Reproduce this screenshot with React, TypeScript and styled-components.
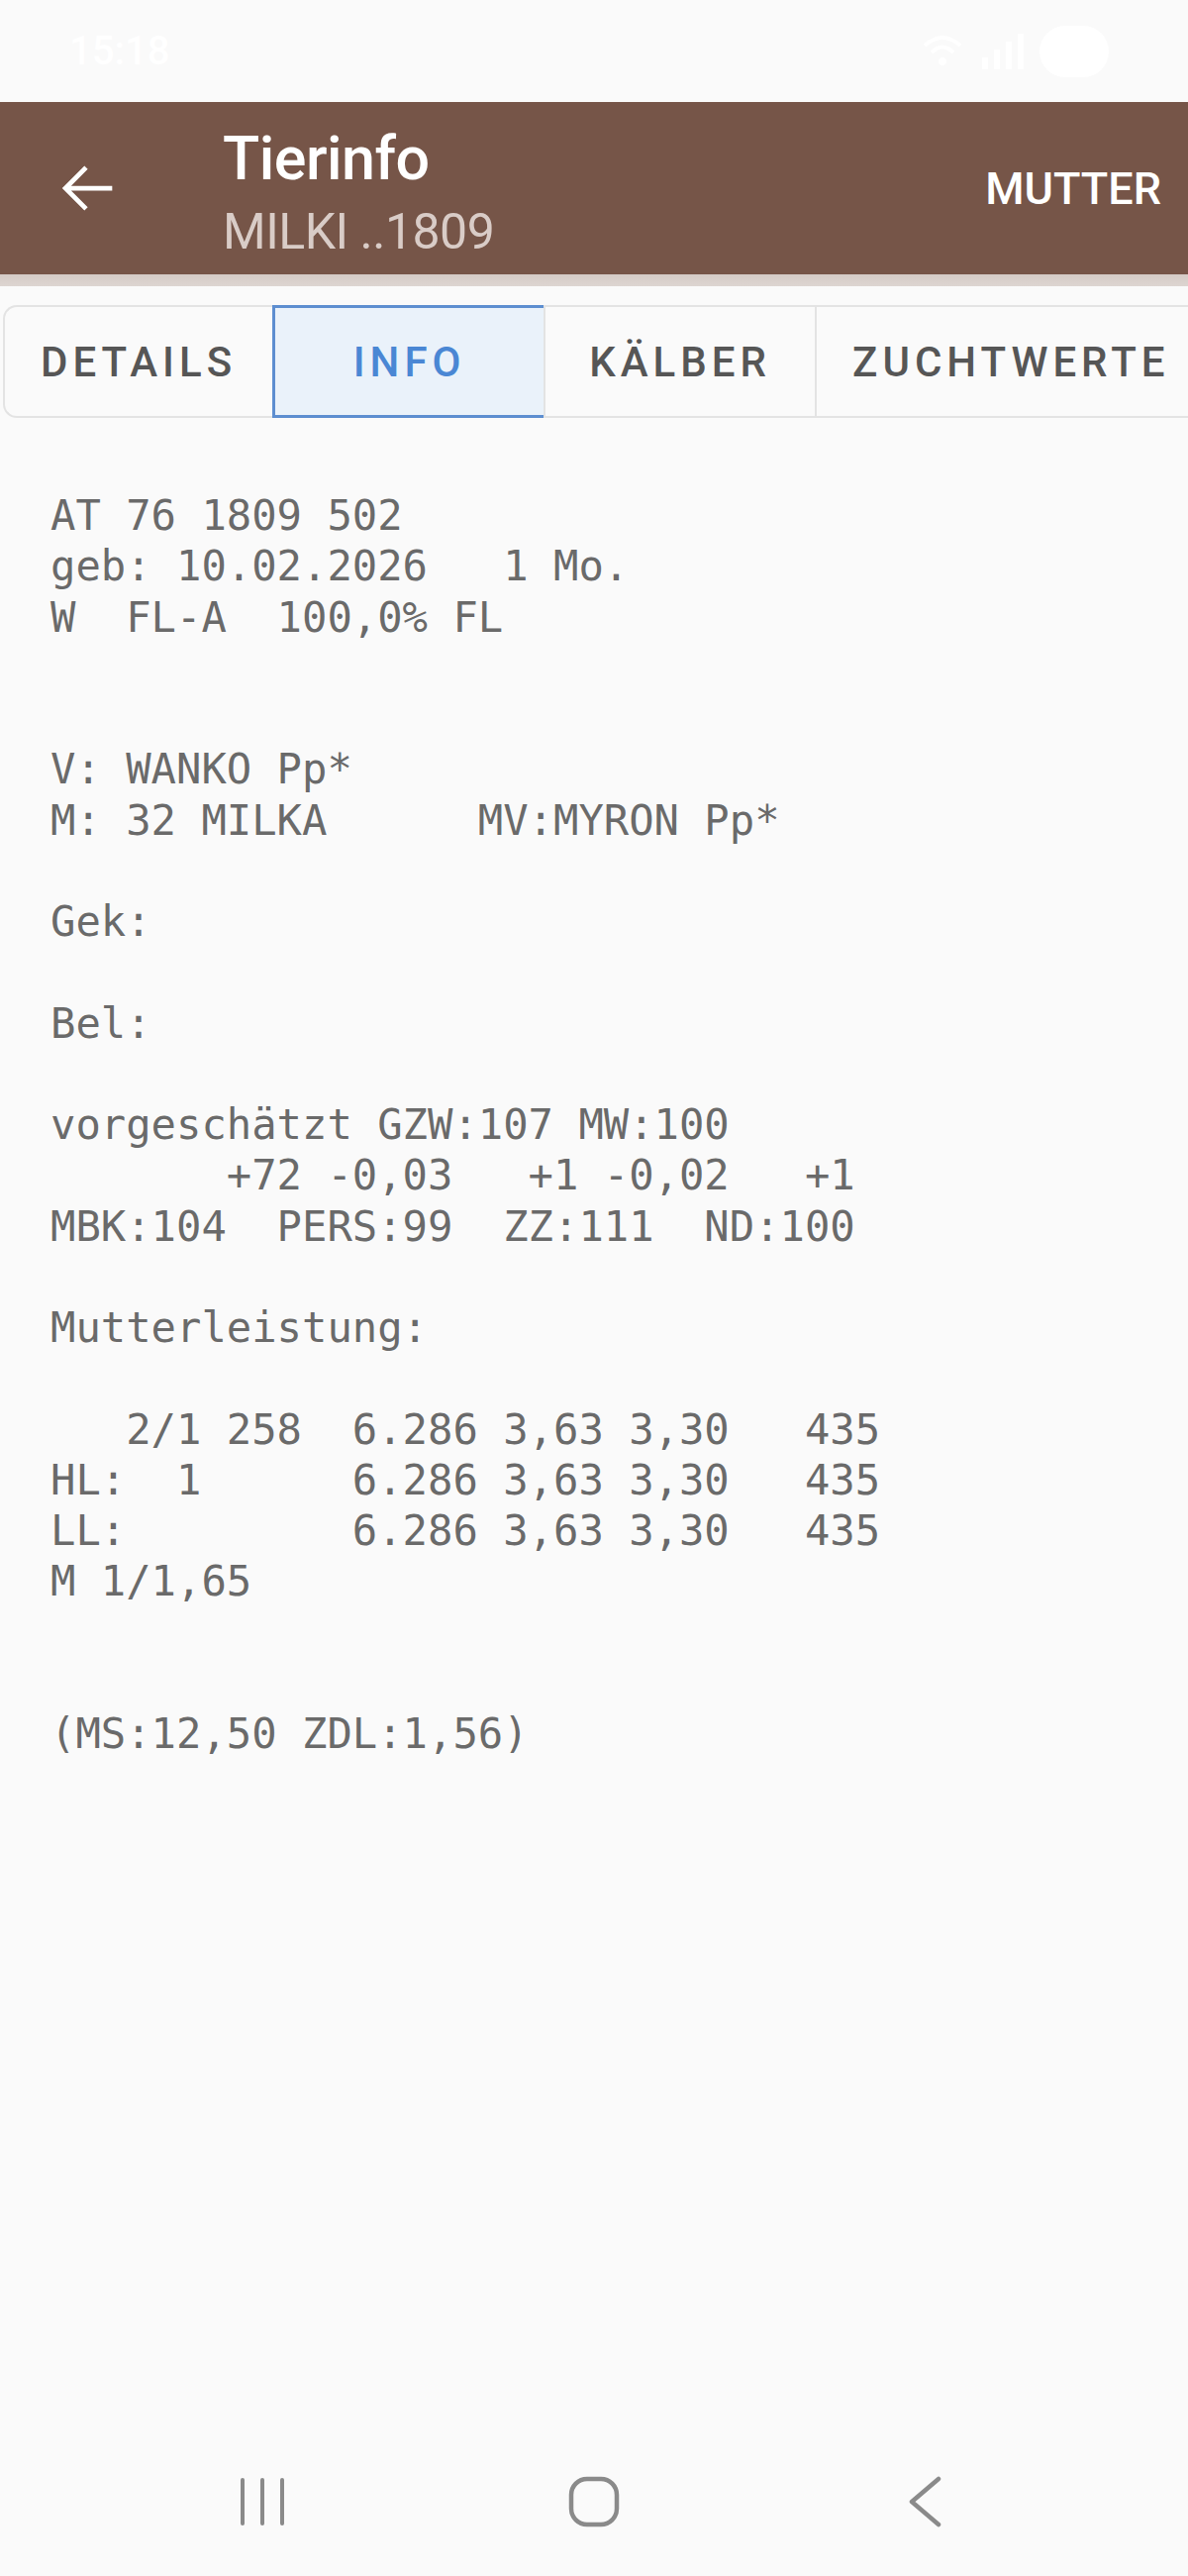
import * as React from "react";
import styled, { createGlobalStyle } from "styled-components";

const GlobalStyle = createGlobalStyle`
  html, body {
    margin: 0;
    padding: 0;
    background: #fafafa;
  }
  * {
    box-sizing: border-box;
  }
`;

const Screen = styled.div`
  display: flex;
  flex-direction: column;
  min-height: 2601px;
  width: 1200px;
  background: #fafafa;
  font-family: Roboto, "Noto Sans", sans-serif;
  overflow: hidden;
`;

const StatusBar = styled.div`
  height: 103px;
  display: flex;
  align-items: center;
  justify-content: space-between;
  padding: 0 80px 0 70px;
  color: #ffffff;
  font-size: 40px;
  font-weight: 500;
`;

const StatusIcons = styled.div`
  display: flex;
  align-items: center;
  gap: 14px;
`;

const Header = styled.div`
  height: 174px;
  background: #765548;
  display: flex;
  align-items: flex-start;
  color: #ffffff;
`;

const BackButton = styled.div`
  width: 225px;
  height: 174px;
  display: flex;
  align-items: center;
  padding-left: 50px;
`;

const TitleBlock = styled.div`
  flex: 1;
  display: flex;
  flex-direction: column;
  padding-top: 21px;
`;

const Title = styled.div`
  font-size: 61px;
  font-weight: 500;
  line-height: 73px;
  letter-spacing: -0.5px;
`;

const SubTitle = styled.div`
  margin-top: 7px;
  font-size: 50px;
  line-height: 61px;
  color: #d9ccc7;
  letter-spacing: -0.5px;
`;

const Action = styled.div`
  height: 174px;
  display: flex;
  align-items: center;
  padding-right: 27px;
  font-size: 45px;
  font-weight: 500;
`;

const HeaderShade = styled.div`
  height: 12px;
  background: linear-gradient(#d5cbc6, #ddd5d1);
`;

const TabBar = styled.div`
  display: flex;
  margin: 19px 0 0 3px;
  height: 114px;
  overflow: hidden;
`;

const Tab = styled.div<{ $active?: boolean; $first?: boolean }>`
  flex-shrink: 0;
  min-width: ${(p) => (p.$first ? "271px" : "274px")};
  padding: 0 36px;
  display: flex;
  align-items: center;
  justify-content: center;
  font-size: 42px;
  font-weight: 500;
  letter-spacing: 5px;
  white-space: nowrap;
  color: ${(p) => (p.$active ? "#4a87d4" : "#565656")};
  background: ${(p) => (p.$active ? "#eaf2fa" : "#fafafa")};
  border: ${(p) => (p.$active ? "3px solid #5d8ed0" : "2px solid #e3e3e3")};
  border-right: none;
  border-radius: ${(p) => (p.$first ? "14px 0 0 14px" : "0")};
`;

const Content = styled.div`
  flex: 1;
  padding: 73px 0 0 51px;
`;

const InfoText = styled.pre`
  margin: 0;
  font-family: "DejaVu Sans Mono", "Liberation Mono", monospace;
  font-size: 42.2px;
  line-height: 51.25px;
  color: #6a6a6a;
  white-space: pre;
`;

const NavBar = styled.div`
  height: 150px;
  display: flex;
  align-items: center;
  justify-content: center;
  gap: 235px;
`;

const NavSlot = styled.div`
  width: 100px;
  display: flex;
  justify-content: center;
  align-items: center;
`;

const infoLines = [
  "AT 76 1809 502",
  "geb: 10.02.2026   1 Mo.",
  "W  FL-A  100,0% FL",
  "",
  "",
  "V: WANKO Pp*",
  "M: 32 MILKA      MV:MYRON Pp*",
  "",
  "Gek:",
  "",
  "Bel:",
  "",
  "vorgeschätzt GZW:107 MW:100",
  "       +72 -0,03   +1 -0,02   +1",
  "MBK:104  PERS:99  ZZ:111  ND:100",
  "",
  "Mutterleistung:",
  "",
  "   2/1 258  6.286 3,63 3,30   435",
  "HL:  1      6.286 3,63 3,30   435",
  "LL:         6.286 3,63 3,30   435",
  "M 1/1,65",
  "",
  "",
  "(MS:12,50 ZDL:1,56)",
];

const tabs = ["DETAILS", "INFO", "KÄLBER", "ZUCHTWERTE"];

const ArrowBack = () => (
  <svg width="76" height="76" viewBox="0 0 24 24">
    <path
      fill="#ffffff"
      d="M20 11.25H6.9l5.3-5.3-1.06-1.06L4.03 12l7.11 7.11 1.06-1.06-5.3-5.3H20z"
    />
  </svg>
);

const StatusRight = () => (
  <StatusIcons>
    <svg width="44" height="40" viewBox="0 0 44 40">
      <path d="M4 14 Q22 -2 40 14" stroke="#fff" strokeWidth="4" fill="none" />
      <path d="M11 21 Q22 10 33 21" stroke="#fff" strokeWidth="4" fill="none" />
      <circle cx="22" cy="30" r="4" fill="#fff" />
    </svg>
    <svg width="48" height="40" viewBox="0 0 48 40">
      <rect x="4" y="26" width="6" height="12" fill="#fff" />
      <rect x="16" y="18" width="6" height="20" fill="#fff" />
      <rect x="28" y="10" width="6" height="28" fill="#fff" />
      <rect x="40" y="2" width="6" height="36" fill="#fff" />
    </svg>
    <svg width="70" height="52" viewBox="0 0 70 52">
      <rect x="0" y="0" width="70" height="52" rx="26" fill="#fff" />
    </svg>
  </StatusIcons>
);

export default function App() {
  return (
    <Screen>
      <GlobalStyle />
      <StatusBar>
        <span>15:18</span>
        <StatusRight />
      </StatusBar>
      <Header>
        <BackButton>
          <ArrowBack />
        </BackButton>
        <TitleBlock>
          <Title>Tierinfo</Title>
          <SubTitle>MILKI ..1809</SubTitle>
        </TitleBlock>
        <Action>MUTTER</Action>
      </Header>
      <HeaderShade />
      <TabBar>
        {tabs.map((t, i) => (
          <Tab key={t} $first={i === 0} $active={t === "INFO"}>
            {t}
          </Tab>
        ))}
      </TabBar>
      <Content>
        <InfoText>{infoLines.join("\n")}</InfoText>
      </Content>
      <NavBar>
        <NavSlot>
          <svg width="50" height="50" viewBox="0 0 50 50">
            <g stroke="#8a8a8a" strokeWidth="4" strokeLinecap="round">
              <line x1="5" y1="3" x2="5" y2="47" />
              <line x1="25" y1="3" x2="25" y2="47" />
              <line x1="45" y1="3" x2="45" y2="47" />
            </g>
          </svg>
        </NavSlot>
        <NavSlot>
          <svg width="52" height="52" viewBox="0 0 52 52">
            <rect
              x="3"
              y="3"
              width="46"
              height="46"
              rx="16"
              fill="none"
              stroke="#8a8a8a"
              strokeWidth="4.5"
            />
          </svg>
        </NavSlot>
        <NavSlot>
          <svg width="36" height="52" viewBox="0 0 36 52">
            <polyline
              points="31,3 4,26 31,49"
              fill="none"
              stroke="#8a8a8a"
              strokeWidth="4.5"
              strokeLinecap="round"
              strokeLinejoin="round"
            />
          </svg>
        </NavSlot>
      </NavBar>
    </Screen>
  );
}
